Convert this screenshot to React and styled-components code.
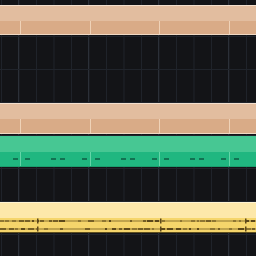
import React from "react";
import styled, { createGlobalStyle } from "styled-components";

const GlobalStyle = createGlobalStyle`
  html, body {
    margin: 0;
    padding: 0;
    background: #131417;
    overflow: hidden;
  }
  #root {
    width: 256px;
    height: 256px;
  }
`;

const SArrange = styled.div`
  width: 256px;
  height: 256px;
  overflow: hidden;
  padding-top: 3px;
  box-sizing: border-box;
  display: flex;
  flex-direction: column;
  background-color: #131417;
  background-image:
    linear-gradient(90deg, #2b3038 1.5px, transparent 1.5px),
    linear-gradient(90deg, #1f232a 1px, transparent 1px);
  background-size: 70px 100%, 17.5px 100%;
  background-position: 18px 0, 1px 0;
`;

const STrack = styled.div`
  flex: 0 0 33px;
  height: 33px;
  box-sizing: border-box;
  border-top: 1px solid ${({ $first }) => ($first ? "transparent" : "#20242b")};
  padding-top: ${({ $first }) => ($first ? "1px" : "0")};
  padding-bottom: 1px;
  display: flex;
`;

const SClip = styled.div`
  flex: 1;
  display: flex;
  flex-direction: column;
  overflow: hidden;
  border-top: 1px solid ${({ $kind }) => palette[$kind].edge};
  border-bottom: 1px solid ${({ $kind }) => palette[$kind].bottom};
`;

const SClipHeader = styled.div`
  flex: 0 0 15px;
  background: ${({ $kind }) => palette[$kind].head};
`;

const SClipBody = styled.div`
  flex: 1;
  position: relative;
  display: flex;
  background: ${({ $kind }) => palette[$kind].body};
`;

const SSegments = styled.div`
  display: flex;
  margin-left: -49px;
`;

const SSegment = styled.div`
  position: relative;
  flex: 0 0 69.4px;
  box-sizing: border-box;
  border-left: 1.5px solid ${({ $kind }) => palette[$kind].divider};
`;

const SNote = styled.div`
  position: absolute;
  top: 6px;
  width: 5px;
  height: 2px;
  background: #127252;
`;

const SWave = styled.svg`
  position: absolute;
  left: 0;
  top: 0;
  width: 256px;
  height: 14px;
`;

const palette = {
  tan: {
    edge: "#f3dfcd",
    bottom: "#f0d9c4",
    head: "#e2bd9f",
    body: "#d9ab87",
    divider: "#efd2b7",
  },
  green: {
    edge: "#45c592",
    bottom: "#1a9e6e",
    head: "#47c793",
    body: "#20b780",
    divider: "#63d5a7",
  },
  yellow: {
    edge: "#fff4d2",
    bottom: "#5e4f1f",
    head: "#fde8aa",
    body: "#f5d56b",
    divider: "#f5d56b",
  },
};

const notePositions = [4, 30, 39, 61];

const rand = (seed) => {
  let s = seed;
  return () => {
    s = (s * 9301 + 49297) % 233280;
    return s / 233280;
  };
};

const wavePath = (y, seed) => {
  const r = rand(seed);
  const spikes = [37, 160, 245];
  let d = "";
  let x = 0;
  while (x < 256) {
    const len = 2 + Math.floor(r() * 5);
    if (r() < 0.6) {
      const amp = 0.4 + r() * 0.7;
      d += `M${x} ${y - amp}h${len}v${amp * 2}h${-len}z`;
    }
    x += len + 1 + Math.floor(r() * 3);
  }
  spikes.forEach((p) => {
    d += `M${p} ${y - 2.5}h1.5v5h-1.5z`;
  });
  return d;
};

const Waveform = () => (
  <SWave viewBox="0 0 256 14">
    <rect x="0" y="2.5" width="256" height="1" fill="#8c7430" />
    <rect x="0" y="10.5" width="256" height="1" fill="#8c7430" />
    <path d={wavePath(3, 7)} fill="#5c481a" />
    <path d={wavePath(11, 19)} fill="#5c481a" />
  </SWave>
);

const Clip = ({ kind }) => (
  <SClip $kind={kind}>
    <SClipHeader $kind={kind} />
    <SClipBody $kind={kind}>
      {kind === "yellow" ? (
        <Waveform />
      ) : (
        <SSegments>
          {[0, 1, 2, 3, 4].map((i) => (
            <SSegment key={i} $kind={kind}>
              {kind === "green" &&
                notePositions.map((p) => <SNote key={p} style={{ left: p }} />)}
            </SSegment>
          ))}
        </SSegments>
      )}
    </SClipBody>
  </SClip>
);

const tracks = ["tan", null, null, "tan", "green", null, "yellow", null];

export default function App() {
  return (
    <>
      <GlobalStyle />
      <SArrange>
        {tracks.map((kind, i) => (
          <STrack key={i} $first={i === 0}>
            {kind && <Clip kind={kind} />}
          </STrack>
        ))}
      </SArrange>
    </>
  );
}
